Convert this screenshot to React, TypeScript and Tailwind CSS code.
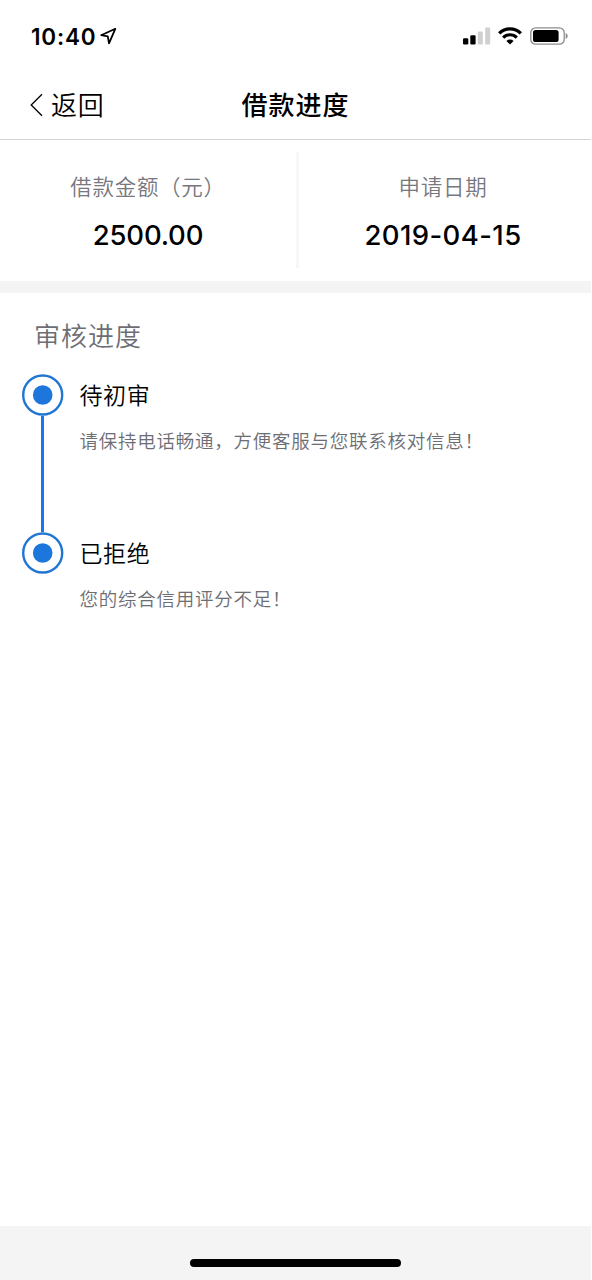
import type { ReactNode } from "react";

type Paso = { titulo: string; detalle: string };

const PASOS: Paso[] = [
  { titulo: "待初审", detalle: "请保持电话畅通，方便客服与您联系核对信息！" },
  { titulo: "已拒绝", detalle: "您的综合信用评分不足！" },
];

export default function App() {
  return (
    <div className="flex h-[1280px] w-[591px] flex-col bg-white font-['Inter','Noto_Sans_CJK_SC',sans-serif] font-[350] text-black">
      <StatusBar />
      <NavBar />

      <section className="flex h-[141px] shrink-0 pt-3">
        <Dato label="借款金额（元）" className="w-[296px]">
          <span className="tracking-[-0.2px]">2500.00</span>
        </Dato>
        <div className="h-[116px] w-[3px] bg-[#f7f7f7]" />
        <Dato label="申请日期" className="flex-1 pr-1">
          <span className="tracking-[0.4px]">2019-04-15</span>
        </Dato>
      </section>

      <div className="h-3 shrink-0 bg-[#f4f4f4]" />

      <section className="flex-1 pt-6">
        <h2 className="pl-[34px] text-[26px] leading-10 tracking-[1px] text-[#6d6d74]">审核进度</h2>
        <ol className="pt-[17px] pl-[21.5px]">
          {PASOS.map((p, i) => (
            <PasoItem key={p.titulo} paso={p} last={i === PASOS.length - 1} />
          ))}
        </ol>
      </section>

      <footer className="flex h-[54px] shrink-0 justify-center bg-[#f4f4f4] pt-[33px]">
        <div className="h-2 w-[211px] rounded-full bg-black" />
      </footer>
    </div>
  );
}

function StatusBar() {
  return (
    <div className="flex h-[72px] shrink-0 items-center justify-between pl-[31px] pr-[23px]">
      <div className="flex items-center gap-1">
        <span className="pt-0.5 text-[22.5px] leading-7 font-semibold tracking-[0.8px]">10:40</span>
        <svg width="17" height="18" viewBox="0 0 17 18" fill="none" stroke="black" strokeWidth="1.8" strokeLinejoin="round">
          <path d="M15.3 1.8 1.2 8.2 7.8 9.3 9 16.3Z" />
        </svg>
      </div>
      <div className="flex items-center">
        <svg width="28" height="18" viewBox="0 0 28 18">
          <rect x="0" y="11.3" width="5.3" height="6.2" rx="1.2" />
          <rect x="7.3" y="8.3" width="5.3" height="9.2" rx="1.2" />
          <rect x="14.8" y="4.6" width="5" height="12.9" rx="1.2" fill="#d0d0d0" />
          <rect x="22.2" y="0.6" width="5" height="16.9" rx="1.2" fill="#d0d0d0" />
        </svg>
        <svg className="ml-[7px]" width="24" height="18" viewBox="0 0 24 18" fill="none" stroke="black">
          <path d="M1.2 6.3a15.3 15.3 0 0 1 21.6 0" strokeWidth="3.3" />
          <path d="M5.2 10.6a9.6 9.6 0 0 1 13.6 0" strokeWidth="3.1" />
          <path d="M12 17.5 8.4 13.9a5.1 5.1 0 0 1 7.2 0Z" fill="black" stroke="none" />
        </svg>
        <svg className="ml-2" width="38" height="18" viewBox="0 0 38 18">
          <rect x="0.8" y="0.8" width="33.4" height="16.4" rx="4.8" fill="none" stroke="#8c8c8c" strokeWidth="1.3" />
          <rect x="3" y="3" width="25.6" height="12" rx="2.6" />
          <path d="M35.7 6v6c1.2-.5 2-1.7 2-3s-.8-2.5-2-3Z" fill="#8c8c8c" />
        </svg>
      </div>
    </div>
  );
}

function NavBar() {
  return (
    <header className="grid h-[68px] shrink-0 grid-cols-[1fr_auto_1fr] items-center border-b border-[#d4d4d4] px-[30px]">
      <button className="flex items-center gap-2 text-left">
        <svg className="mb-0.5" width="13" height="24" viewBox="0 0 13 24" fill="none" stroke="black" strokeWidth="1.3">
          <path d="M12 1.2 1.2 12 12 22.8" />
        </svg>
        <span className="text-[26px] leading-10 tracking-[0.8px]">返回</span>
      </button>
      <h1 className="text-[26px] leading-10 font-medium tracking-[1px]">借款进度</h1>
      <span />
    </header>
  );
}

function Dato({ label, children, className = "" }: { label: string; children: ReactNode; className?: string }) {
  return (
    <div className={`flex flex-col items-center pt-[19px] ${className}`}>
      <div className="text-[21.5px] leading-8 tracking-[0.7px] text-[#77777e]">{label}</div>
      <div className="mt-3.5 text-[27.5px] leading-9 font-medium">{children}</div>
    </div>
  );
}

function PasoItem({ paso, last }: { paso: Paso; last: boolean }) {
  return (
    <li className="flex h-[157.5px] gap-4">
      <div className="flex w-[42px] flex-col items-center">
        <svg className="shrink-0" width="42" height="42" viewBox="0 0 42 42">
          <circle cx="20.7" cy="21" r="19.5" fill="none" stroke="#2176d2" strokeWidth="2.4" />
          <circle cx="20.7" cy="21" r="9.8" fill="#1c76dc" />
        </svg>
        {!last && <div className="w-[3px] flex-1 bg-[#1677f0]" />}
      </div>
      <div>
        <div className="pt-px text-[23px] leading-[42px] tracking-[0.6px]">{paso.titulo}</div>
        <div className="mt-2.5 text-[18.5px] leading-7 tracking-[0.75px] text-[#6d6d74]">{paso.detalle}</div>
      </div>
    </li>
  );
}
